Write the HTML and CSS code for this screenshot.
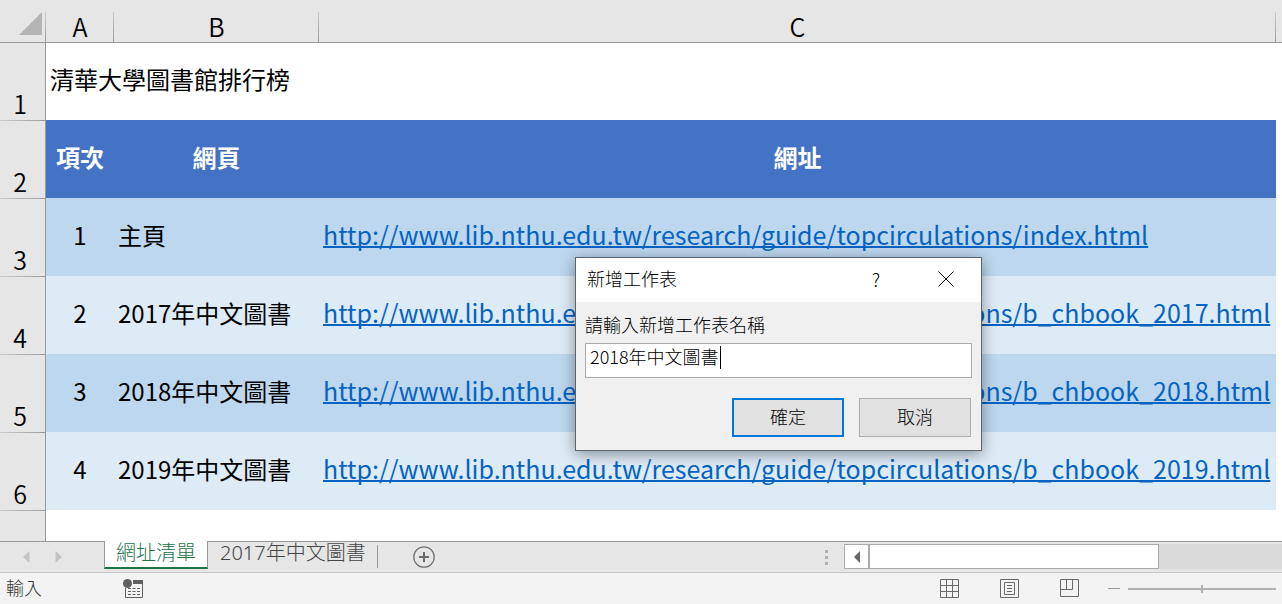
FILE: index.html
```html
<!DOCTYPE html>
<html lang="zh-TW">
<head>
    <meta charset="UTF-8">
    <meta name="viewport" content="width=device-width, initial-scale=1.0">
    <title>清華大學圖書館排行榜</title>
    <link rel="stylesheet" href="styles.css">
</head>
<body>
    <main class="sheet">
        <table class="grid">
            <colgroup>
                <col class="col-head">
                <col class="col-a">
                <col class="col-b">
                <col class="col-c">
                <col class="col-rest">
            </colgroup>
            <thead>
                <tr>
                    <th class="corner"><svg width="24" height="24" viewBox="0 0 24 24"><path d="M23 0v23H0z" fill="#b4b4b4"/></svg></th>
                    <th>A</th>
                    <th>B</th>
                    <th>C</th>
                    <th></th>
                </tr>
            </thead>
            <tbody>
                <tr class="title-row">
                    <th>1</th>
                    <td colspan="4">清華大學圖書館排行榜</td>
                </tr>
                <tr class="heading">
                    <th>2</th>
                    <td>項次</td>
                    <td>網頁</td>
                    <td>網址</td>
                    <td></td>
                </tr>
                <tr class="dark">
                    <th>3</th>
                    <td class="num">1</td>
                    <td>主頁</td>
                    <td><a href="http://www.lib.nthu.edu.tw/research/guide/topcirculations/index.html">http://www.lib.nthu.edu.tw/research/guide/topcirculations/index.html</a></td>
                    <td></td>
                </tr>
                <tr class="light">
                    <th>4</th>
                    <td class="num">2</td>
                    <td>2017年中文圖書</td>
                    <td><a href="http://www.lib.nthu.edu.tw/research/guide/topcirculations/b_chbook_2017.html">http://www.lib.nthu.edu.tw/research/guide/topcirculations/b_chbook_2017.html</a></td>
                    <td></td>
                </tr>
                <tr class="dark">
                    <th>5</th>
                    <td class="num">3</td>
                    <td>2018年中文圖書</td>
                    <td><a href="http://www.lib.nthu.edu.tw/research/guide/topcirculations/b_chbook_2018.html">http://www.lib.nthu.edu.tw/research/guide/topcirculations/b_chbook_2018.html</a></td>
                    <td></td>
                </tr>
                <tr class="light">
                    <th>6</th>
                    <td class="num">4</td>
                    <td>2019年中文圖書</td>
                    <td><a href="http://www.lib.nthu.edu.tw/research/guide/topcirculations/b_chbook_2019.html">http://www.lib.nthu.edu.tw/research/guide/topcirculations/b_chbook_2019.html</a></td>
                    <td></td>
                </tr>
                <tr class="blank">
                    <th></th>
                    <td colspan="4"></td>
                </tr>
            </tbody>
        </table>

        <form class="dialog" role="dialog" aria-labelledby="dialog-title">
            <div class="dialog-bar">
                <span id="dialog-title">新增工作表</span>
                <button type="button" class="bar-button" aria-label="說明">?</button>
                <button type="button" class="bar-button" aria-label="關閉">
                    <svg width="16" height="16" viewBox="0 0 16 16"><path d="M.5.5l15 15M15.5.5l-15 15" stroke="#000"/></svg>
                </button>
            </div>
            <div class="dialog-body">
                <label for="sheet-name">請輸入新增工作表名稱</label>
                <div class="field">
                    <input type="text" id="sheet-name" value="2018年中文圖書">
                    <span class="caret"></span>
                </div>
                <div class="actions">
                    <button type="submit" class="button primary">確定</button>
                    <button type="button" class="button">取消</button>
                </div>
            </div>
        </form>
    </main>

    <nav class="tabs">
        <div class="tab-nav">
            <button type="button" aria-label="上一個"><svg width="7" height="12" viewBox="0 0 7 12"><path d="M6.500 0v12L0 6z" fill="#c3c3c3"/></svg></button>
            <button type="button" aria-label="下一個"><svg width="7" height="12" viewBox="0 0 7 12"><path d="M.5 0v12L7 6z" fill="#c3c3c3"/></svg></button>
        </div>
        <button type="button" class="tab active">網址清單</button>
        <button type="button" class="tab">2017年中文圖書</button>
        <button type="button" class="add" aria-label="新增工作表">
            <svg width="22" height="22" viewBox="0 0 22 22" fill="none"><circle cx="11" cy="11" r="10.200" stroke="#767676" stroke-width="1.300"/><path d="M11 6v10M6 11h10" stroke="#6a6a6a" stroke-width="2"/></svg>
        </button>
        <svg class="grip" width="3" height="15" viewBox="0 0 3 15" fill="#b0b0b0"><path d="M0 0h3v3H0zM0 6h3v3H0zM0 12h3v3H0z"/></svg>
        <div class="scroll">
            <button type="button" class="scroll-left" aria-label="向左捲動"><svg width="6" height="12" viewBox="0 0 6 12"><path d="M6 0v12L0 6z" fill="#666"/></svg></button>
            <div class="thumb"></div>
        </div>
    </nav>

    <footer class="status">
        <span class="mode">輸入</span>
        <button type="button" class="macro" aria-label="錄製巨集">
            <svg width="20" height="19" viewBox="0 0 20 19"><path d="M10 1h10v4H10z" fill="#5f6062"/><path d="M2.500 9v9.500h17V4" fill="none" stroke="#5f6062"/><path d="M5 9.500h12M5 12.500h12M5 15.500h12" stroke="#5f6062" stroke-dasharray="3 1.500"/><circle cx="4.500" cy="4.500" r="4.500" fill="#5f6062"/></svg>
        </button>
        <div class="views">
            <button type="button" aria-label="標準模式"><svg width="19" height="19" viewBox="0 0 19 19" fill="none" stroke="#6a6a6a"><path d="M.5.5h18v18H.5zM6.500.5v18M12.500.5v18M.5 6.500h18M.5 12.500h18"/></svg></button>
            <button type="button" aria-label="整頁模式"><svg width="19" height="19" viewBox="0 0 19 19" fill="none" stroke="#6a6a6a"><path d="M.5.5h18v18H.5zM4.500 3.500h10v12h-10zM7 6.500h5M7 9.500h5M7 12.500h5"/></svg></button>
            <button type="button" aria-label="分頁預覽"><svg width="19" height="19" viewBox="0 0 19 19" fill="none" stroke="#6a6a6a"><path d="M.5.5h18v17H.5zM6.500.5v10M12.500.5v10M.5 10.500h12"/></svg></button>
        </div>
        <button type="button" class="minus" aria-label="縮小"><svg width="12" height="1" viewBox="0 0 12 1"><path d="M0 0h12v1H0z" fill="#999"/></svg></button>
        <input type="range" class="zoom" aria-label="縮放" min="0" max="100" value="50">
    </footer>
</body>
</html>
```

FILE: styles.css
```css
* {
    box-sizing: border-box;
}
body {
    margin: 0;
    min-height: 100vh;
    display: flex;
    flex-direction: column;
    background: #fff;
    color: #000;
    font-family: "Noto Sans CJK TC", sans-serif;
    font-size: 18px;
}
button {
    padding: 0;
    border: none;
    background: none;
    color: inherit;
    font: inherit;
}
svg {
    display: block;
}

/* 工作表 */
.sheet {
    position: relative;
    flex: 1;
    display: flex;
}
.grid {
    width: 100%;
    table-layout: fixed;
    border-collapse: separate;
    border-spacing: 0;
    font-size: 24px;
    line-height: 32px;
}
.col-head {
    width: 46px;
}
.col-a {
    width: 68px;
}
.col-b {
    width: 205px;
}
.col-rest {
    width: 6px;
}
.grid th {
    padding: 0;
    font-size: 25px;
    font-weight: 350;
    background-color: #e6e6e6;
    background-repeat: no-repeat;
}
.grid thead th {
    height: 43px;
    padding-top: 10px;
    border-bottom: 1px solid #999;
    background-image: linear-gradient(#ccc, #999);
    background-size: 1px 30px;
    background-position: right bottom;
}
.grid thead th:last-child {
    background-image: none;
}
.grid .corner {
    padding: 6px 3px 0 0;
}
.corner svg {
    margin-left: auto;
}
.grid tbody th {
    height: 78px;
    padding-right: 5px;
    padding-bottom: 1px;
    vertical-align: bottom;
    border-right: 1px solid #999;
    background-image: linear-gradient(to right, #ccc, #999);
    background-size: 100% 1px;
}
.grid .title-row th {
    height: 77px;
    background-image: none;
}
.grid .blank th {
    height: 31px;
}
.grid td {
    padding: 0 0 5px 4px;
    white-space: nowrap;
}
.grid .heading td {
    padding-left: 0;
    text-align: center;
    font-weight: 700;
    color: #fff;
    background: #4472c4;
}
.grid .num {
    padding-left: 0;
    text-align: center;
}
.grid .dark td {
    background: #bdd7ee;
}
.grid .light td {
    background: #ddebf7;
}
.grid .heading td:last-child,
.grid .dark td:last-child,
.grid .light td:last-child {
    background: #fff;
}
.grid a {
    font-size: 25px;
    color: #0563c1;
    text-decoration-thickness: 2px;
    text-decoration-skip-ink: none;
    text-underline-offset: 1px;
}

/* 對話方塊 */
.dialog {
    position: absolute;
    left: 575px;
    top: 257px;
    width: 407px;
    border: 1px solid #5f6468;
    background: #f0f0f0;
    box-shadow: 0 3px 14px rgba(0, 0, 0, 0.4);
    font-weight: 300;
    line-height: 24px;
}
.dialog-bar {
    display: flex;
    align-items: center;
    height: 44px;
    padding-left: 11px;
    background: #fff;
}
.dialog-bar span {
    flex: 1;
    padding-bottom: 4px;
}
.bar-button {
    display: grid;
    place-items: center;
    width: 70px;
    height: 44px;
    padding-bottom: 2px;
}
.dialog-body {
    padding: 10px 9px 13px;
}
.dialog-body label {
    display: block;
}
.field {
    position: relative;
    margin: 7px 0 20px;
}
.field input {
    display: block;
    width: 100%;
    height: 35px;
    padding: 0 4px 9px;
    border: 1px solid #ababab;
    background: #fff;
    font: inherit;
    color: #000;
    outline: none;
}
.caret {
    position: absolute;
    left: 135px;
    top: 3px;
    width: 1px;
    height: 23px;
    background: #000;
}
.actions {
    display: flex;
    justify-content: flex-end;
    gap: 15px;
    padding-right: 1px;
}
.button {
    width: 112px;
    height: 39px;
    padding-bottom: 3px;
    border: 1px solid #adadad;
    background: #e1e1e1;
}
.primary {
    border: 2px solid #0078d7;
}

/* 工作表標籤 */
.tabs {
    display: flex;
    height: 31px;
    border-top: 1px solid #999;
    background: #e6e6e6;
}
.tab-nav {
    display: flex;
    align-items: center;
    gap: 25px;
    width: 104px;
    padding-left: 23px;
}
.tab {
    height: 26px;
    padding: 0 12px 4px;
    font-family: "Noto Sans", "Noto Sans CJK TC", sans-serif;
    font-size: 20px;
    font-weight: 300;
    line-height: 22px;
    color: #444;
    background: linear-gradient(#999, #999) right bottom / 1px 23px no-repeat;
}
.tab.active {
    height: 28px;
    margin-top: -1px;
    padding: 0 11px 2px;
    border: solid #999;
    border-width: 0 1px 2px;
    border-bottom-color: #217346;
    background: #fff;
    color: #217346;
}
.add {
    margin-left: 35px;
}
.grip {
    align-self: center;
    margin-left: auto;
}
.scroll {
    display: flex;
    width: 438px;
    height: 25px;
    margin: 2px 0 0 16px;
    background: #dadada;
}
.scroll-left {
    display: grid;
    place-items: center;
    width: 25px;
    border: 1px solid #ababab;
    background: #fff;
}
.thumb {
    width: 290px;
    border: 1px solid #ababab;
    background: #fff;
}

/* 狀態列 */
.status {
    display: flex;
    align-items: center;
    height: 32px;
    padding: 0 6px;
    border-top: 1px solid #c6c6c6;
    background: #f3f3f3;
    color: #333;
    font-weight: 300;
    line-height: 24px;
}
.mode {
    padding-bottom: 3px;
}
.macro {
    margin-left: 81px;
}
.views {
    display: flex;
    gap: 41px;
    margin-left: auto;
}
.minus {
    margin: 0 8px 0 29px;
}
.zoom {
    appearance: none;
    width: 148px;
    height: 8px;
    margin: 0;
    background: linear-gradient(#b0b0b0, #b0b0b0) center / 100% 2px no-repeat;
}
.zoom::-webkit-slider-thumb {
    appearance: none;
    width: 2px;
    height: 8px;
    background: #b0b0b0;
}
```
